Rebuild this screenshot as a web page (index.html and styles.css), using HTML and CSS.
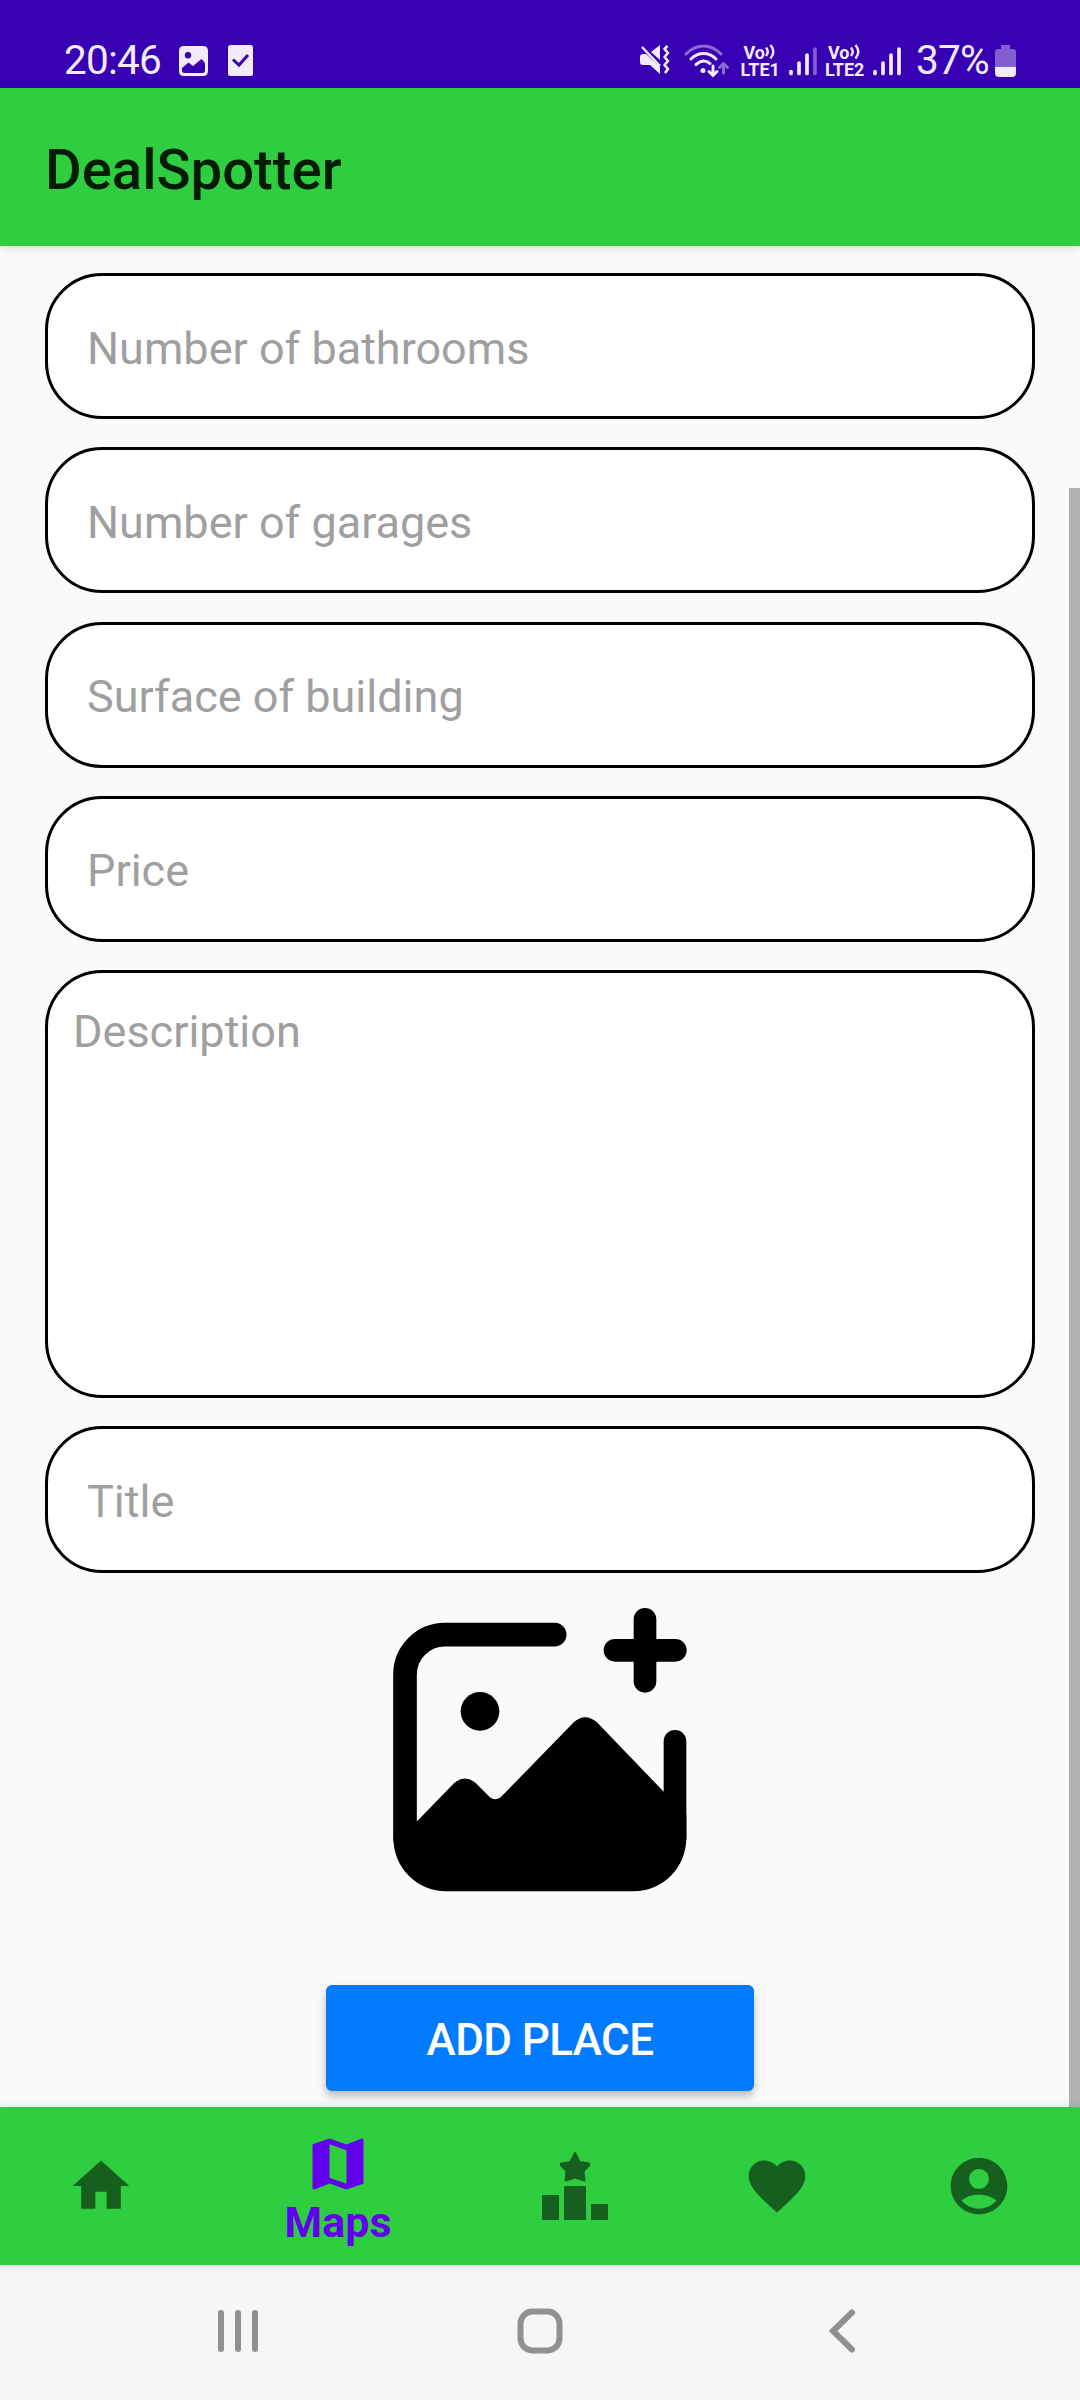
FILE: index.html
```html
<!DOCTYPE html>
<html lang="en">
<head>
<meta charset="utf-8">
<title>DealSpotter</title>
<link rel="stylesheet" href="styles.css">
</head>
<body>
<div class="screen">
  <div class="status">
    <span class="clock">20:46</span>
    <svg class="icon-photo" width="29" height="30" viewBox="0 0 29 30"><path fill="currentColor" fill-rule="evenodd" d="M5 0H24Q29 0 29 5V25Q29 30 24 30H5Q0 30 0 25V5Q0 0 5 0ZM9 6A3.200 3.200 0 1 0 9 12.400A3.200 3.200 0 1 0 9 6ZM3 22V24.500Q3 27 5.500 27H23.500Q26 27 26 24.500V17L22.500 13L14 20L9.500 16.500Z"/></svg>
    <svg class="icon-check" width="25" height="31" viewBox="0 0 25 31"><rect width="25" height="31" rx="2.500" fill="currentColor"/><path d="M5 14.500L11 20L20 10" fill="none" stroke="#3700b3" stroke-width="3"/></svg>
    <div class="status-right">
      <svg width="30" height="30" viewBox="0 0 30 30"><g fill="currentColor"><path d="M0 12Q0 9 3 9H6L20 22V29L10 20H3Q0 20 0 17ZM11 7L20 0V15Z"/></g><path d="M2 2L20 21" stroke="currentColor" stroke-width="2.500"/><path d="M27.500 1L24.500 4L28 8L24.500 12L28 16L24.500 20L28 24L25 28" fill="none" stroke="currentColor" stroke-width="2.600" stroke-linejoin="round"/></svg>
      <svg class="icon-wifi" width="46" height="36" viewBox="0 0 46 36"><g fill="none" stroke="currentColor" stroke-width="3" stroke-linecap="round"><path opacity=".45" d="M2 11Q10 3 19.500 3T37 11"/><path d="M7 16Q12.500 10.500 19.500 10.500T32 16"/><path d="M12 21.500Q19.500 15 26 20.500"/><path d="M29 23V32M25 28.500L29 32.500L33 28.500"/><path opacity=".45" d="M39.500 30V20.500M35.500 24.500L39.500 20.500L43.500 24.500"/></g><circle cx="19" cy="27.500" r="2.500" fill="currentColor"/></svg>
      <div class="volte"><div class="vo">Vo<svg width="11" height="16" viewBox="0 0 11 16"><path d="M1 3.500Q4.500 7.500 1 12M5.500 1Q11 7.500 5.500 14.500" fill="none" stroke="currentColor" stroke-width="2.400"/></svg></div><div>LTE1</div></div>
      <svg class="signal" width="28" height="31" viewBox="0 0 28 31"><g stroke="currentColor" stroke-width="3.700" stroke-linecap="round"><path d="M2 25.500V27.500M10 17V27.500M18 9V27.500"/><path opacity=".4" d="M26 3V27.500"/></g></svg>
      <div class="volte second"><div class="vo">Vo<svg width="11" height="16" viewBox="0 0 11 16"><path d="M1 3.500Q4.500 7.500 1 12M5.500 1Q11 7.500 5.500 14.500" fill="none" stroke="currentColor" stroke-width="2.400"/></svg></div><div>LTE2</div></div>
      <svg class="signal" width="28" height="31" viewBox="0 0 28 31"><g stroke="currentColor" stroke-width="3.700" stroke-linecap="round"><path d="M2 25.500V27.500M10 17V27.500M18 9V27.500M26 3V27.500"/></g></svg>
      <span class="percent">37%</span>
      <svg class="battery" width="21" height="32" viewBox="0 0 21 32"><path opacity=".4" fill="currentColor" d="M6 0H15V4H18Q21 4 21 7V22H0V7Q0 4 3 4H6Z"/><path fill="currentColor" d="M0 22H21V28Q21 32 17 32H4Q0 32 0 28Z"/></svg>
    </div>
  </div>

  <header class="appbar"><h1>DealSpotter</h1></header>

  <main class="form">
    <label class="field">Number of bathrooms</label>
    <label class="field">Number of garages</label>
    <label class="field">Surface of building</label>
    <label class="field">Price</label>
    <label class="field area">Description</label>
    <label class="field last">Title</label>
    <svg class="add-photo" width="294" height="284" viewBox="0 0 880 852"><g fill="none" stroke="#000" stroke-width="68" stroke-linecap="round"><path stroke-width="71" d="M484 80H155A120 120 0 0 0 35 200V690"/><path d="M755 34V220M665 127H846M845 400V690"/></g><circle cx="260" cy="310" r="58"/><path d="M0 690L66 645L182 526Q215 497 248 526L290 568Q305 580 322 568L542 342Q575 313 610 342L812 552L879 620V690A158 160 0 0 1 721 850H158A158 160 0 0 1 0 690Z"/></svg>
    <button class="add">ADD PLACE</button>
    <div class="scrollbar"></div>
  </main>

  <nav class="tabs">
    <div class="tab"><svg width="68" height="68" viewBox="0 0 24 24"><path d="M10 20v-6h4v6h5v-8h3L12 3 2 12h3v8z"/></svg></div>
    <div class="tab active"><svg width="68" height="68" viewBox="0 0 24 24"><path d="M20.500 3l-.16.030L15 5.100 9 3 3.360 4.900c-.21.070-.36.250-.36.480V20.500c0 .280.220.500.500.500l.160-.030L9 18.900l6 2.100 5.640-1.900c.210-.070.360-.250.360-.480V3.500c0-.280-.220-.500-.500-.500zM15 19l-6-2.110V5l6 2.110V19z"/></svg><span>Maps</span></div>
    <div class="tab"><svg width="66" height="68" viewBox="0 0 66 68"><path d="M0 43H17V68H0ZM22 35.500Q22 34 23.500 34H42.500Q44 34 44 35.500V68H22ZM49 52H66V68H49Z"/><path stroke="#165f1e" stroke-width="2" stroke-linejoin="round" d="M33 1L37.500 10L47 11.500V13.500L41.500 19L42.500 28.500L33 25.500L23.500 28.500L24.500 19L19 13.500V11.500L28.500 10Z"/></svg></div>
    <div class="tab"><svg width="68" height="68" viewBox="0 0 24 24"><path d="M12 21.350l-1.450-1.320C5.400 15.360 2 12.280 2 8.500 2 5.420 4.420 3 7.500 3c1.740 0 3.410.810 4.500 2.090C13.090 3.810 14.760 3 16.500 3 19.580 3 22 5.420 22 8.500c0 3.780-3.400 6.860-8.550 11.540L12 21.350z"/></svg></div>
    <div class="tab"><svg width="68" height="68" viewBox="0 0 24 24"><path fill-rule="evenodd" d="M12 2C6.480 2 2 6.480 2 12s4.480 10 10 10 10-4.480 10-10S17.520 2 12 2zM12 6c1.930 0 3.500 1.570 3.500 3.500S13.930 13 12 13s-3.500-1.570-3.500-3.500S10.070 6 12 6zM12 20c-2.030 0-4.430-.820-6.140-2.880C7.550 15.800 9.680 15 12 15s4.450.8 6.140 2.120C16.430 19.180 14.030 20 12 20z"/></svg></div>
  </nav>

  <div class="sysnav">
    <svg width="46" height="46" viewBox="0 0 46 46"><path d="M6 5V41M23 5V41M40 5V41"/></svg>
    <svg width="46" height="46" viewBox="0 0 46 46"><rect x="3.500" y="3.500" width="39" height="39" rx="12"/></svg>
    <svg width="46" height="46" viewBox="0 0 46 46"><path d="M33 4.500L14 23L33 41.500"/></svg>
  </div>
</div>
</body>
</html>
```
FILE: styles.css
```css
* { box-sizing: border-box; }

body {
  margin: 0;
  font-family: Roboto, "Liberation Sans", sans-serif;
}

svg { display: block; flex: none; overflow: visible; }

.screen {
  width: 1080px;
  height: 2400px;
  display: flex;
  flex-direction: column;
  background: #fafafa;
  overflow: hidden;
}

.status {
  height: 88px;
  background: #3700b3;
  color: #f2ebfc;
  display: flex;
  align-items: flex-start;
  padding: 45px 64px 0 64px;
}

.clock, .percent {
  font-size: 40.500px;
  line-height: 48px;
  margin-top: -9px;
  letter-spacing: -0.8px;
}

.clock { width: 115px; }
.icon-photo { margin-top: 1px; }
.icon-check { margin-left: 20px; }

.status-right {
  display: flex;
  align-items: flex-start;
  margin-left: 387px;
}

.icon-wifi { margin: -2px 0 0 14px; }

.volte {
  width: 40px;
  margin: -1px 0 0 10.500px;
  font-size: 18px;
  font-weight: 700;
  line-height: 17px;
  white-space: nowrap;
}

.volte.second { margin-left: 8px; }

.vo {
  display: flex;
  padding-left: 3px;
  height: 17px;
}

.signal { margin: 1px 0 0 8.500px; }
.second + .signal { margin-left: 8px; }

.percent { width: 78px; margin-left: 15px; }

.battery { margin-left: 1px; }

.appbar {
  height: 158px;
  flex: none;
  background: #2fce41;
  display: flex;
  align-items: center;
  padding: 6px 45px 0;
  box-shadow: 0 2px 8px rgba(0, 0, 0, 0.12);
}

.appbar h1 {
  margin: 0;
  font-size: 56.250px;
  font-weight: 500;
  color: #041c06;
}

.form {
  position: relative;
  height: 1861px;
  flex: none;
  display: flex;
  flex-direction: column;
  gap: 28.200px;
  padding: 27.300px 45px 0;
}

.field {
  height: 146px;
  flex: none;
  border: 3px solid #000;
  border-radius: 57px;
  background: #fff;
  color: #9f9f9f;
  font-size: 45px;
  line-height: 54px;
  padding: 45.600px 39px 0;
}

.field.area {
  height: 428px;
  padding: 32px 25px 0;
}

.field.last { height: 147px; }

.add-photo { margin: 6.500px auto 0; }

.add {
  width: 428px;
  height: 106px;
  flex: none;
  margin: 65px auto 0;
  padding: 3px 0 0;
  border: 0;
  border-radius: 6px;
  background: #007aff;
  color: #fff;
  font: 500 44px Roboto, "Liberation Sans", sans-serif;
  letter-spacing: -0.600px;
  box-shadow: 0 5px 8px rgba(0, 0, 0, 0.26);
}

.scrollbar {
  position: absolute;
  right: 0;
  top: 242px;
  bottom: 0;
  width: 11px;
  background: #b2b2b2;
}

.tabs {
  position: relative;
  height: 158px;
  flex: none;
  background: #2fce41;
  display: grid;
  grid-template-columns: 202px 272px 202px 202px 202px;
  box-shadow: 0 0 8px rgba(0, 0, 0, 0.12);
}

.tab {
  display: flex;
  flex-direction: column;
  align-items: center;
  padding-top: 45px;
}

.tab svg { fill: #165f1e; }

.tab.active { padding-top: 23px; color: #6200ee; }
.tab.active svg { fill: #6200ee; }

.tab span {
  font-size: 43px;
  font-weight: 700;
  line-height: 50px;
  margin-top: -1px;
}

.sysnav {
  flex: 1;
  background: #f6f6f6;
  display: flex;
  justify-content: space-between;
  align-items: flex-start;
  padding: 43px 215px 0;
}

.sysnav svg {
  fill: none;
  stroke: #909090;
  stroke-width: 6;
  stroke-linecap: round;
}
```
